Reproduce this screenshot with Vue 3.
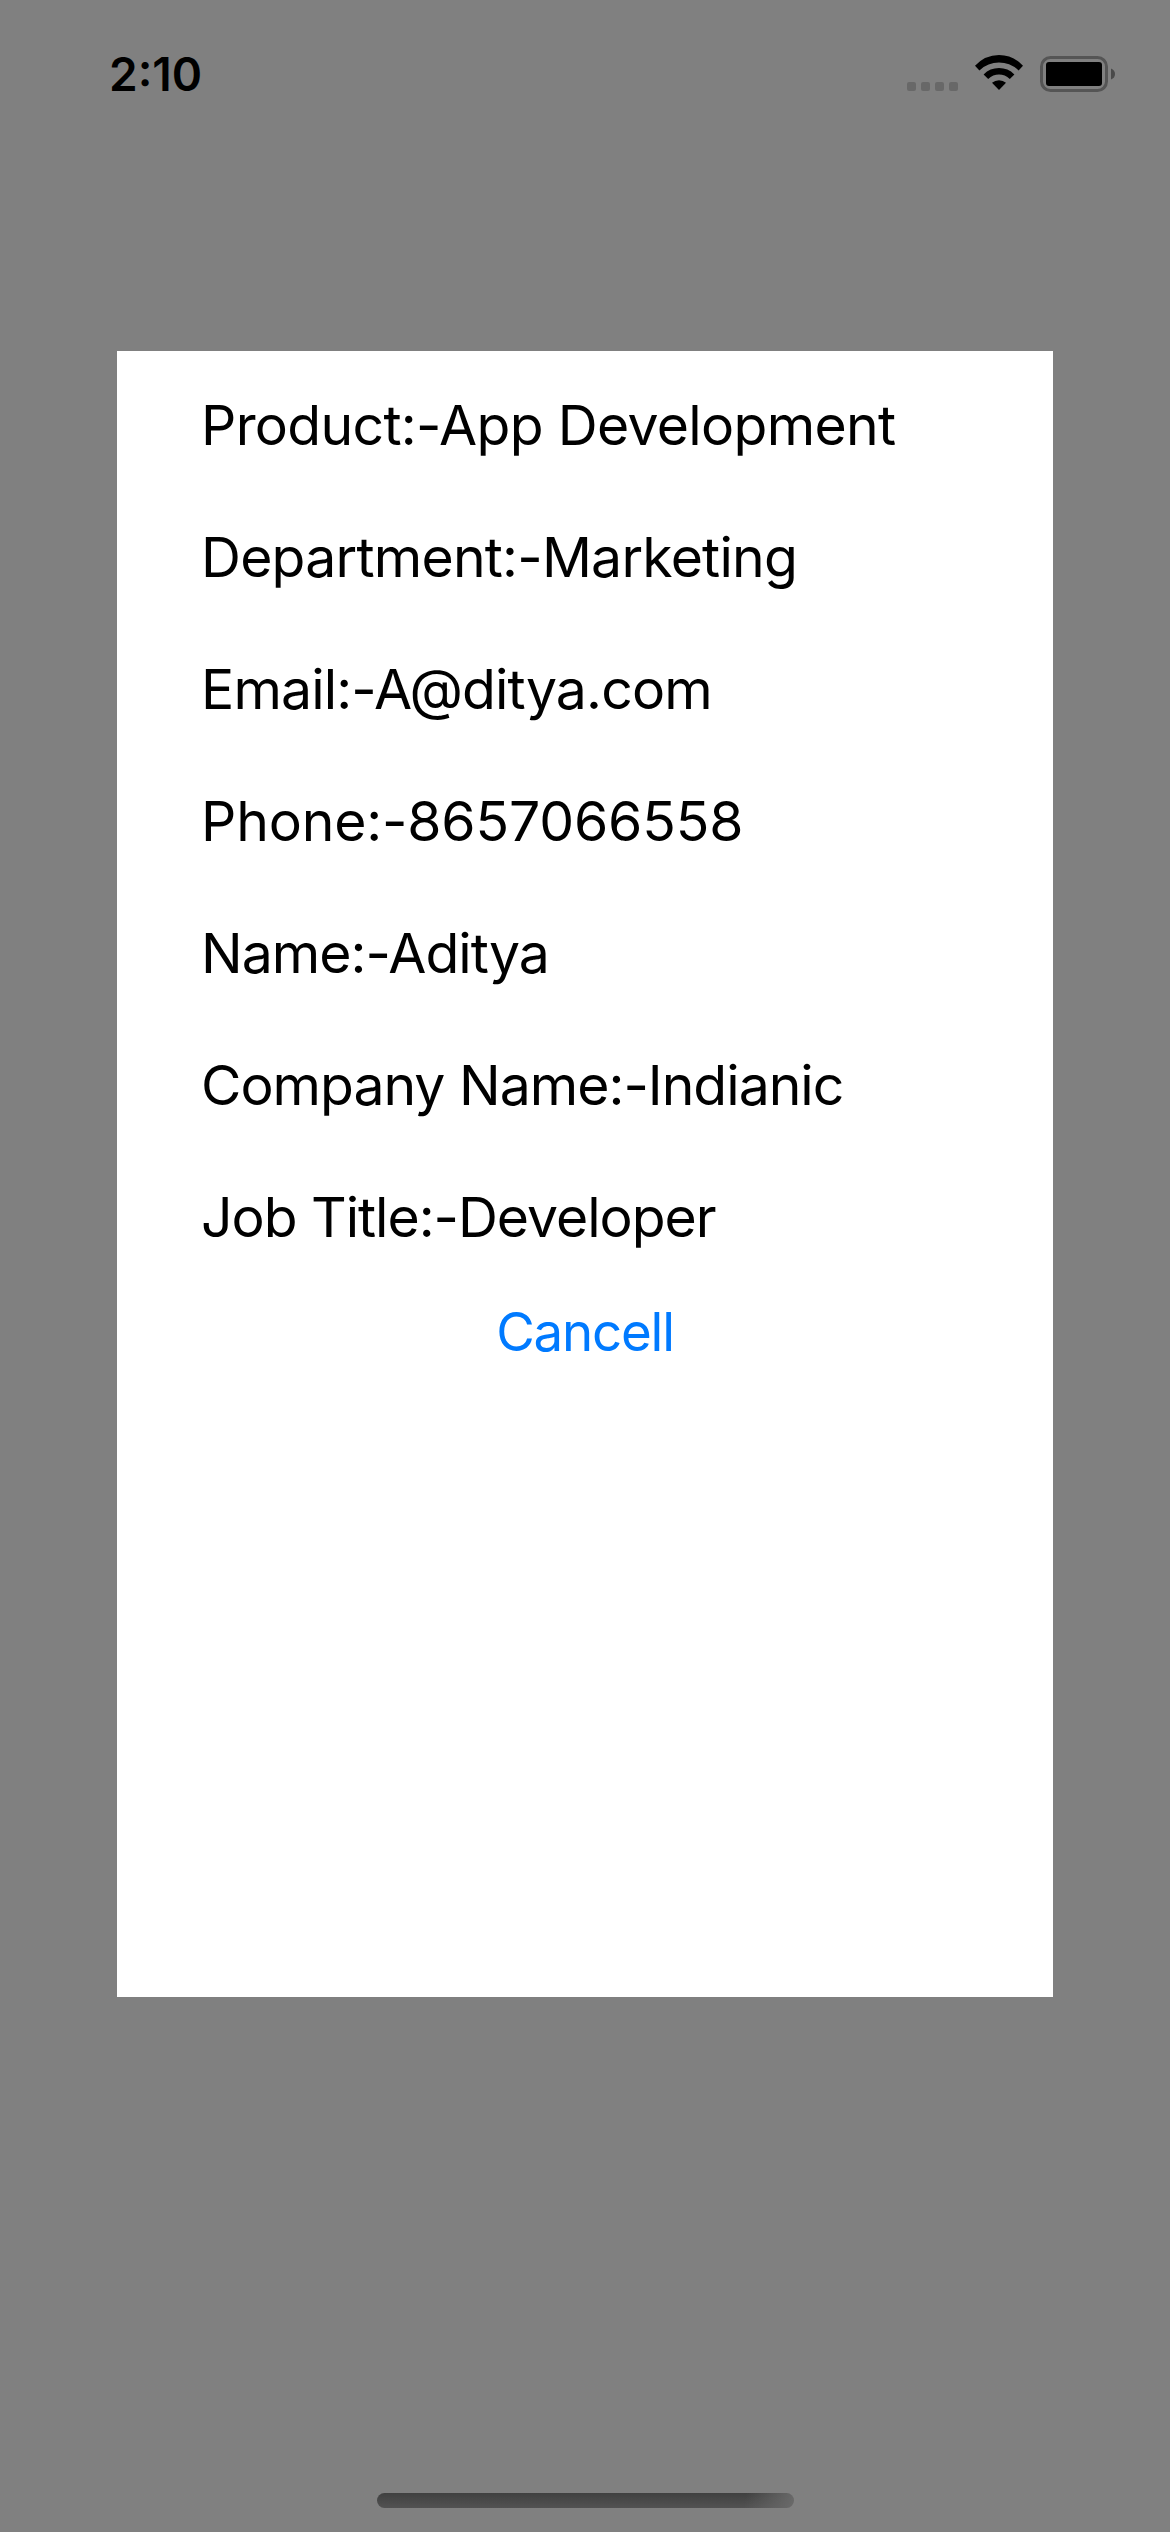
<script setup>
const rows = [
  { label: 'Product', value: 'App Development', spacing: -0.68 },
  { label: 'Department', value: 'Marketing', spacing: -0.77 },
  { label: 'Email', value: 'A@ditya.com', spacing: -0.85 },
  { label: 'Phone', value: '8657066558', spacing: -0.16 },
  { label: 'Name', value: 'Aditya', spacing: -0.95 },
  { label: 'Company Name', value: 'Indianic', spacing: -0.99 },
  { label: 'Job Title', value: 'Developer', spacing: -1.03 },
]
</script>

<template>
  <div class="screen">
    <header class="status">
      <span class="time">2:10</span>
      <div class="indicators">
        <div class="signal"><i v-for="n in 4" :key="n"></i></div>
        <svg class="wifi" width="50" height="38" viewBox="0 0 50 38">
          <path d="M1 12.8Q11 2 25 2T49 12.8L44.6 17.4Q36 9.6 25 9.6T5.4 17.4Z" />
          <path d="M9.6 21.4Q16 15 25 15T40.4 21.4L35.8 26Q31 21.6 25 21.6T14.2 26Z" />
          <path d="M18 29.8Q21 27.3 25 27.3T32 29.8L25 37Z" />
        </svg>
        <svg class="battery" width="76" height="36" viewBox="0 0 76 36">
          <rect x="1.5" y="1.5" width="65" height="33" rx="9" fill="none" stroke="#555" stroke-width="3" />
          <rect x="6" y="6" width="56" height="24" rx="3" fill="#000" />
          <path d="M71 12.5Q75 14 75 18T71 23.5Z" fill="#4a4a4a" />
        </svg>
      </div>
    </header>
    <main class="card">
      <ul class="rows">
        <li v-for="row in rows" :key="row.label">
          <span :style="{ letterSpacing: row.spacing + 'px' }">{{ row.label }}:-{{ row.value }}</span>
        </li>
      </ul>
      <button class="cancel" type="button">Cancell</button>
    </main>
    <footer class="home"><div class="bar"></div></footer>
  </div>
</template>

<style>
body {
  margin: 0;
  background: #808080;
}
</style>

<style scoped>
.screen {
  display: flex;
  flex-direction: column;
  box-sizing: border-box;
  width: 1170px;
  height: 2532px;
  background: #808080;
  color: #000;
  font-family: Inter, "Liberation Sans", sans-serif;
}
.status {
  display: flex;
  justify-content: space-between;
  height: 351px;
  box-sizing: border-box;
  padding: 44px 54px 0 109px;
}
.time {
  font-size: 46px;
  font-weight: 600;
  line-height: 61px;
  height: 61px;
}
.indicators {
  display: flex;
  height: 60px;
}
.signal {
  display: flex;
  gap: 5px;
  margin: 38px 16px 0 0;
}
.signal i {
  width: 9px;
  height: 9px;
  border-radius: 2px;
  background: #686868;
}
.wifi {
  margin: 9px 16px 0 0;
}
.battery {
  margin-top: 12px;
}
.card {
  box-sizing: border-box;
  width: 936px;
  height: 1646px;
  margin: 0 auto;
  padding-top: 8px;
  background: #fff;
}
.rows {
  margin: 0;
  padding: 0 0 0 84px;
  list-style: none;
}
.rows li {
  height: 132px;
  font-size: 55.3px;
  line-height: 132px;
  white-space: nowrap;
}
.cancel {
  display: block;
  width: 100%;
  height: 98px;
  margin: 0;
  padding: 0;
  border: 0;
  background: none;
  color: #007aff;
  font: 52.8px/98px Inter, "Liberation Sans", sans-serif;
  letter-spacing: -1.2px;
}
.home {
  display: flex;
  justify-content: center;
  padding-top: 496px;
}
.bar {
  width: 417px;
  height: 15px;
  border-radius: 8px;
  background: linear-gradient(100deg, transparent 88%, #6a6a6a 100%), linear-gradient(#404040, #525252);
}
</style>
